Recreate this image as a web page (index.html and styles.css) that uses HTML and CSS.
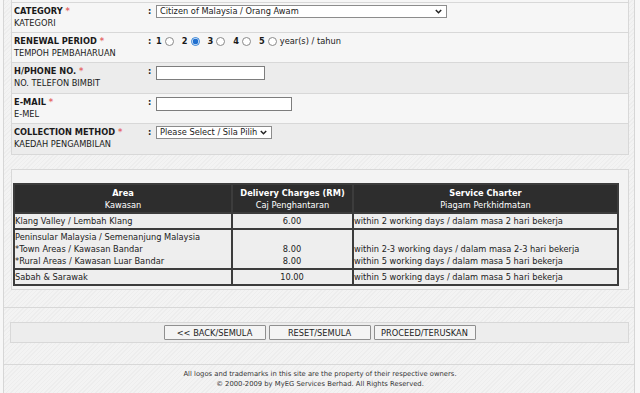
FILE: index.html
```html
<!DOCTYPE html>
<html lang="en">
<head>
    <meta charset="UTF-8">
    <title>Renewal - Delivery</title>
    <link rel="stylesheet" href="styles.css">
</head>
<body>
    <div class="page">
        <!-- Form rows -->
        <div class="form-panel">
            <div class="row">
                <div class="label"><b>CATEGORY <span class="req">*</span></b><br>KATEGORI</div>
                <div class="colon">:</div>
                <div class="field">
                    <select class="sel sel-category">
                        <option>Citizen of Malaysia / Orang Awam</option>
                    </select>
                </div>
            </div>
            <div class="row">
                <div class="label"><b>RENEWAL PERIOD <span class="req">*</span></b><br>TEMPOH PEMBAHARUAN</div>
                <div class="colon">:</div>
                <div class="field periods">
                    <label class="opt"><b>1</b><input type="radio" name="period"></label>
                    <label class="opt"><b>2</b><input type="radio" name="period" checked></label>
                    <label class="opt"><b>3</b><input type="radio" name="period"></label>
                    <label class="opt"><b>4</b><input type="radio" name="period"></label>
                    <label class="opt last"><b>5</b><input type="radio" name="period"></label>
                    <span>year(s) / tahun</span>
                </div>
            </div>
            <div class="row dark">
                <div class="label"><b>H/PHONE NO. <span class="req">*</span></b><br>NO. TELEFON BIMBIT</div>
                <div class="colon">:</div>
                <div class="field"><input type="text" class="txt txt-phone"></div>
            </div>
            <div class="row">
                <div class="label"><b>E-MAIL <span class="req">*</span></b><br>E-MEL</div>
                <div class="colon">:</div>
                <div class="field"><input type="text" class="txt txt-email"></div>
            </div>
            <div class="row dark">
                <div class="label"><b>COLLECTION METHOD <span class="req">*</span></b><br>KAEDAH PENGAMBILAN</div>
                <div class="colon">:</div>
                <div class="field">
                    <select class="sel sel-method">
                        <option>Please Select / Sila Pilih</option>
                    </select>
                </div>
            </div>
        </div>

        <!-- Delivery charges -->
        <div class="table-panel">
            <table class="rates">
                <tr>
                    <th class="col-area"><b>Area</b><br>Kawasan</th>
                    <th class="col-charge"><b>Delivery Charges (RM)</b><br>Caj Penghantaran</th>
                    <th><b>Service Charter</b><br>Piagam Perkhidmatan</th>
                </tr>
                <tr>
                    <td>Klang Valley / Lembah Klang</td>
                    <td class="num">6.00</td>
                    <td>within 2 working days / dalam masa 2 hari bekerja</td>
                </tr>
                <tr>
                    <td>Peninsular Malaysia / Semenanjung Malaysia<br>*Town Areas / Kawasan Bandar<br>*Rural Areas / Kawasan Luar Bandar</td>
                    <td class="num">&nbsp;<br>8.00<br>8.00</td>
                    <td>&nbsp;<br>within 2-3 working days / dalam masa 2-3 hari bekerja<br>within 5 working days / dalam masa 5 hari bekerja</td>
                </tr>
                <tr>
                    <td>Sabah &amp; Sarawak</td>
                    <td class="num">10.00</td>
                    <td>within 5 working days / dalam masa 5 hari bekerja</td>
                </tr>
            </table>
        </div>

        <!-- Buttons -->
        <div class="actions">
            <div class="btn-bar">
                <button type="button" class="btn">&lt;&lt; BACK/SEMULA</button>
                <button type="reset" class="btn">RESET/SEMULA</button>
                <button type="submit" class="btn">PROCEED/TERUSKAN</button>
            </div>
        </div>

        <div class="footer">
            All logos and trademarks in this site are the property of their respective owners.<br>
            &copy; 2000-2009 by MyEG Services Berhad. All Rights Reserved.
        </div>
    </div>
</body>
</html>
```

FILE: styles.css
```css
/* General */
body {
    margin: 0;
    background-color: #f7f7f7;
    font-family: 'DejaVu Sans', Verdana, sans-serif;
    font-size: 8.25px;
    line-height: 12px;
    color: #1a1a1a;
}

.page {
    margin: 0 5px 0 3px;
    padding: 0 5px 0 7px;
    border-left: 1px solid #d6d6d6;
    border-right: 1px solid #d6d6d6;
    background: repeating-linear-gradient(135deg, #ededed 0, #ededed 1px, #f3f3f3 1px, #f3f3f3 3px);
}

/* Form rows */
.form-panel {
    padding-top: 2px;
    background-color: #f6f6f6;
    border: 1px solid #d8d8d8;
    border-top: none;
}

.row {
    display: flex;
    align-items: flex-start;
    padding: 2px 2px 3px;
    border-top: 1px solid #d8d8d8;
    background-color: #f6f6f6;
}

.row.dark {
    padding-bottom: 4px;
    background-color: #ececec;
}

.label {
    width: 134px;
    white-space: nowrap;
}

.req {
    color: #e56a6a;
}

.colon {
    width: 8px;
    font-weight: bold;
}

.field {
    display: flex;
    align-items: center;
}

.sel {
    appearance: none;
    -webkit-appearance: none;
    height: 13px;
    padding: 0 3px;
    border: 1px solid #8c8c8c;
    border-radius: 0;
    background: #fff url("data:image/svg+xml,%3Csvg xmlns='http://www.w3.org/2000/svg' width='7' height='5' viewBox='0 0 7 5'%3E%3Cpath d='M0.8 1 L3.5 3.7 L6.2 1' fill='none' stroke='%23222' stroke-width='1.5'/%3E%3C/svg%3E") no-repeat right 4px center;
    font-family: inherit;
    font-size: 8.25px;
    line-height: 11px;
    color: #1a1a1a;
}

.sel-category {
    width: 291px;
}

.sel-method {
    width: 116px;
}

.txt {
    height: 14px;
    margin-top: 1px;
    padding: 0 2px;
    box-sizing: border-box;
    border: 1px solid #7d7d7d;
    background-color: #fff;
    font-family: inherit;
    font-size: 8.25px;
}

.txt-phone {
    width: 109px;
}

.txt-email {
    width: 136px;
}

/* Radio options */
.opt {
    display: flex;
    align-items: center;
    margin-right: 8px;
}

.opt.last {
    margin-right: 3px;
}

.opt input {
    appearance: none;
    -webkit-appearance: none;
    width: 9px;
    height: 9px;
    margin: 0 0 0 3px;
    border: 1px solid #8a8a8a;
    border-radius: 50%;
    background-color: #fff;
}

.opt input:checked {
    border-color: #2f7fd6;
    background: radial-gradient(circle, #1f6fcf 0, #1f6fcf 2.6px, #fff 3.2px);
}

/* Delivery charges table */
.table-panel {
    margin-top: 14px;
    padding: 13px 0 3px 1px;
    background-color: #f3f3f3;
    border: 1px solid #d8d8d8;
}

.rates {
    width: 606px;
    border-collapse: collapse;
    border: 2px solid #3c3c3c;
}

.rates th,
.rates td {
    border: 2px solid #3c3c3c;
    padding: 1px 1px 1px 0;
    vertical-align: top;
    text-align: left;
    white-space: nowrap;
}

.rates th {
    padding: 2px 0 1px;
    background-color: #2d2d2d;
    color: #fff;
    font-weight: normal;
    text-align: center;
}

.rates td {
    background-color: #eeeeee;
    color: #222;
}

.rates td.num {
    text-align: center;
}

.col-area {
    width: 216px;
}

.col-charge {
    width: 119px;
}

/* Buttons */
.actions {
    margin: 17px -5px 0 -7px;
    padding: 14px 5px 21px 6px;
    border-top: 1px solid #d8d8d8;
    border-bottom: 1px solid #d8d8d8;
}

.btn-bar {
    display: flex;
    justify-content: center;
    gap: 3px;
    padding: 2px 0 2px;
    background-color: #ededed;
    border: 1px solid #d8d8d8;
}

.btn {
    width: 102px;
    height: 15px;
    padding: 0;
    border: 1px solid #8f8f8f;
    border-radius: 1px;
    background-color: #f4f4f4;
    font-family: inherit;
    font-size: 8.25px;
    color: #222;
}

/* Footer */
.footer {
    padding: 4px 0 10px;
    text-align: center;
    font-size: 6.8px;
    line-height: 10px;
    color: #333;
}
```
